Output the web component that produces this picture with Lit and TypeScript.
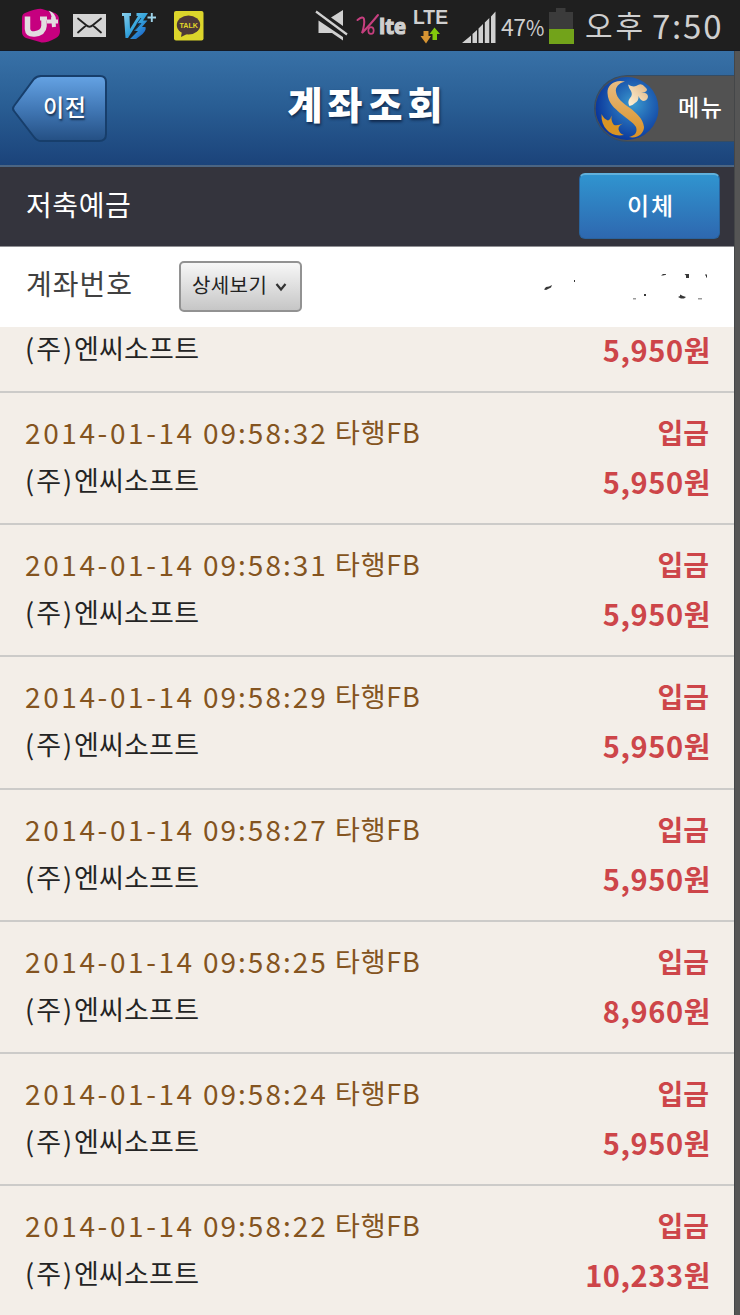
import { LitElement, html, css, svg, nothing } from "lit";
import { customElement, property } from "lit/decorators.js";

interface Deposit {
  time: string;
  amount: string;
}

const deposits: Deposit[] = [
  { time: "", amount: "5,950" },
  { time: "09:58:32", amount: "5,950" },
  { time: "09:58:31", amount: "5,950" },
  { time: "09:58:29", amount: "5,950" },
  { time: "09:58:27", amount: "5,950" },
  { time: "09:58:25", amount: "8,960" },
  { time: "09:58:24", amount: "5,950" },
  { time: "09:58:22", amount: "10,233" },
];

@customElement("status-bar")
class StatusBar extends LitElement {
  static styles = css`
    :host {
      display: flex;
      align-items: center;
      height: 51px;
      background: #1f1f1f;
      color: #cfcfcf;
      white-space: nowrap;
      border-bottom: 1px solid #151a24;
      box-sizing: border-box;
    }
    .icons { display: block; flex: none; }
    .percent { width: 43px; font-size: 23px; line-height: 50px; letter-spacing: -0.4px; padding-top: 2px; }
    .percent .sign { display: inline-block; font-size: 21px; letter-spacing: 0; transform: scaleX(0.95); transform-origin: left; }
    .battery { margin-left: 4px; }
    .meridiem { margin-left: 11px; width: 67px; font-size: 30px; letter-spacing: 3px; line-height: 44px; margin-top: -3px; }
    .clock { font-size: 33px; letter-spacing: 1.8px; line-height: 50px; }
    .lte { font: bold 20px "Liberation Sans", Arial, sans-serif; fill: #cfcfcf; }
    .volte { font: bold 21px "Open Sans", sans-serif; fill: #cfcfcf; stroke: #cfcfcf; stroke-width: 1.2; }
    .talk { font: bold 8px "Liberation Sans", Arial, sans-serif; fill: #e1d629; }
  `;

  render() {
    return html`
      <svg class="icons" width="501" height="50" viewBox="0 0 501 50">
        ${svg`
        <defs>
          <linearGradient id="v3" x1="0" y1="0" x2="1" y2="1">
            <stop offset="0" stop-color="#8bd0ec" /><stop offset=".5" stop-color="#35a4dc" /><stop offset="1" stop-color="#1550c0" />
          </linearGradient>
        </defs>
        <path d="M25 13 Q38 8 42 9 L55 13 Q59 15 59 19 L60 31 Q60 36 56 38 Q45 44 40 42 L26 38 Q22 36 22 32 V18 Q22 14 25 13Z" fill="#c6007f" />
        <path d="M27.500 16.500 V29 Q28 34.500 34.500 34 Q43.500 33 44 26 V18" fill="none" stroke="#e2dce0" stroke-width="5.500" />
        <path d="M40 18.500 H47 M47 21.500 H58 M53 17 L54 27" fill="none" stroke="#e2dce0" stroke-width="4" />
        <path d="M48.500 10.500 Q56 13 56 20 L51.500 22 Q52.500 15 48.500 10.500Z" fill="#e2dce0" />
        <rect x="73" y="14" width="33" height="23" fill="#d4d4d4" />
        <path d="M78 18.500 L86 25 Q89.500 28.500 93 25 L101 18.500 M78 32.500 L86 25.500 M101 32.500 L93 25.500" fill="none" stroke="#202020" stroke-width="1.800" stroke-linecap="round" />
        <path d="M122 13 H131 V16 H129.500 L130 29 L138 16 H136.500 V13 H148 L143 20.500 H147.500 L142 27 H145.500 Q147 31 140 36 L136 39 H130 L138 31 H134 L140.500 23.500 H137 L128 38 H125.500 L124 16 H122Z" fill="url(#v3)" />
        <path d="M134.500 31 L141 23.500 H137 L141 18" fill="none" stroke="#173b60" stroke-width="1" />
        <path d="M147.500 17.500 H156 M151.800 13 V22" stroke="#9ed3e9" stroke-width="1.900" />
        <rect x="174" y="11" width="29.500" height="29.500" rx="2" fill="#dcd52b" />
        <ellipse cx="188.500" cy="25" rx="11.700" ry="9.500" fill="#4c3837" />
        <path d="M182 31 L181 37 L189 33Z" fill="#4c3837" />
        <text class="talk" x="179.500" y="28" textLength="18.500" lengthAdjust="spacingAndGlyphs">TALK</text>

        <path d="M318.500 20.500 L343 37 V40.500 L332 33 H318.500Z M331 17.500 L343 10 V26Z" fill="#d0d0d0" />
        <path d="M317 14.500 L346 37" stroke="#1f1f1f" stroke-width="2" />
        <path d="M316 11.500 L347 34.500" stroke="#d0d0d0" stroke-width="2.200" />
        <path d="M357.500 20 Q363 15.500 364 19 Q365 24 362 33 Q369 26 378 15" fill="none" stroke="#c63f7f" stroke-width="2" stroke-linecap="round" />
        <ellipse cx="371" cy="30.500" rx="2.700" ry="3.400" fill="none" stroke="#c63f7f" stroke-width="1.700" />
        <text class="volte" x="379" y="33.500" textLength="27" lengthAdjust="spacingAndGlyphs">lte</text>
        <text class="lte" x="413" y="24" textLength="35" lengthAdjust="spacingAndGlyphs">LTE</text>
        <path d="M423.500 31 H428.500 V36 H431 L426 43.500 L420.500 36 H423.500Z" fill="#d69433" />
        <path d="M432.500 40 H437 V34 H440 L434.500 27.500 L429.500 34 H432.500Z" fill="#83c90c" />
        <path d="M462 43 L471 35.500 V43Z M472.500 34 L477 30 V43 H472.500Z M478.500 28.500 L483 24 V43 H478.500Z M484.800 22.500 L489.300 18 V43 H484.800Z M491 16.500 L495.500 11.500 V43 H491Z" fill="#d0d0d0" />
        `}
      </svg>
      <div class="percent">47<span class="sign">%</span></div>
      <svg class="icons battery" width="26" height="50" viewBox="0 0 26 50">
        <path d="M1 12 H8 V8 H17.500 V12 H25 V29 H1Z" fill="#3b3b3b" />
        <rect x="1" y="29" width="25" height="15" fill="#72a31a" />
      </svg>
      <div class="meridiem">오후</div>
      <div class="clock">7:50</div>
    `;
  }
}

@customElement("nav-header")
class NavHeader extends LitElement {
  static styles = css`
    :host {
      display: grid;
      grid-template-columns: 240px 1fr 240px;
      height: 116px;
      box-sizing: border-box;
      background: linear-gradient(#3871a7, #2a5f95 45%, #1b437a);
      border-bottom: 2px solid #4b6583;
      color: #fff;
    }
    .back { display: grid; width: 98px; height: 70px; margin: 22px 0 0 10px; }
    .back svg, .back span { grid-area: 1 / 1; }
    .back span { font-size: 23px; font-weight: 500; line-height: 67px; padding-left: 33px; letter-spacing: 0.5px; text-shadow: 1px 2px 2px #17304f; }
    .title { text-align: center; font-size: 38px; font-weight: 900; line-height: 104px; letter-spacing: 5px; text-indent: 1px; text-shadow: 1px 2px 3px #10284b; white-space: nowrap; }
    .menu { display: flex; justify-self: end; box-sizing: border-box; width: 140px; height: 67px; margin-top: 24px; background: #525252; border: solid #344c64; border-width: 1px 0 1px 1px; border-radius: 34px 0 0 34px; }
    .menu span { flex: 1; padding-left: 19px; font-size: 23px; font-weight: 500; line-height: 61px; letter-spacing: 1.5px; white-space: nowrap; }
  `;

  render() {
    return html`
      <div class="back">
        <svg width="98" height="70" viewBox="0 0 98 70">
          <defs>
            <linearGradient id="b" x2="0" y2="1"><stop stop-color="#65a3e4" /><stop offset=".5" stop-color="#4279b7" /><stop offset="1" stop-color="#244f83" /></linearGradient>
          </defs>
          <path d="M4 33 L24 6 Q27 3 31 3 H90 Q96 3 96 9 V61 Q96 68 89 68 H31 Q27 68 24 64 L4 38 Q2 35.500 4 33Z" fill="url(#b)" stroke="#173e6b" stroke-width="2" />
        </svg>
        <span>이전</span>
      </div>
      <div class="title">계좌조회</div>
      <div class="menu">
        <svg width="64" height="65" viewBox="0 0 64 65">
          <defs>
            <radialGradient id="ball" cx=".6" cy=".42" r=".62"><stop stop-color="#3b9bd0" /><stop offset=".48" stop-color="#2266b5" /><stop offset="1" stop-color="#09359a" /></radialGradient>
            <linearGradient id="gold" x2="0" y2="1"><stop stop-color="#e8bc83" /><stop offset="1" stop-color="#d99124" /></linearGradient>
            <linearGradient id="leaf" x1="1" y1="0" x2="0" y2="1"><stop stop-color="#dfb481" /><stop offset="1" stop-color="#fff4da" /></linearGradient>
          </defs>
          <circle cx="32" cy="32.500" r="31.500" fill="url(#ball)" />
          <path d="M30 5.500 C20 3 12 9 12.500 17 C13 28 20 32 25 37 C32 43 38 46 41 51 C43 57 39 60 34 61 C43 63 49 57 49 51 C48 42 40 36 35 32 C28 27 22 23 21 16 C20 11 24 7 30 5.500Z" fill="url(#gold)" />
          <path d="M33 8.500 Q39 12 43 9 Q47 7 50 11 Q54 14 50 16 L46 16.500 Q53 16 53 21 Q52 25 48 25 Q45 24 43.500 20 Q44 25 40 27 Q37 30 34.500 30 Q32 26 35 22 Q38 19 36 15 Q34 13 33 8.500Z" fill="url(#leaf)" />
          <path d="M6.500 38 Q9 43 13 44.500 Q16 43 16.500 39.500 Q16 46 19 49 Q23 50 28 47.500 Q23 50 23.500 53.500 Q25 58 29 59 Q18 61 12 54 Q6 48 6.500 38Z" fill="#d99424" />
        </svg>
        <span>메뉴</span>
      </div>
    `;
  }
}

@customElement("account-panel")
class AccountPanel extends LitElement {
  static styles = css`
    :host { display: block; }
    .name-row { display: flex; justify-content: space-between; box-sizing: border-box; height: 79px; padding: 6px 14px 0 26px; background: #34343d; color: #fff; }
    .name { font-size: 28px; line-height: 62px; letter-spacing: 0.6px; }
    .transfer { box-sizing: border-box; width: 141px; height: 66px; border: 1px solid #29639d; border-top: 2px solid #61b1dc; border-radius: 6px; background: linear-gradient(#3094cf, #2e68b0); text-align: center; font-size: 24px; font-weight: 500; line-height: 60px; letter-spacing: 2px; text-indent: 3px; }
    .number-row { display: flex; align-items: center; box-sizing: border-box; height: 81px; padding: 0 20px 0 26px; border-top: 1px solid #909094; background: #fff; color: #414141; }
    .label { width: 153px; font-size: 28px; line-height: 68px; padding-bottom: 8px; letter-spacing: 1px; }
    .detail { display: flex; align-items: center; box-sizing: border-box; width: 123px; height: 51px; margin-bottom: 1px; padding: 0 11px 4px; border: 2px solid #929292; border-radius: 5px; background: linear-gradient(#f7f7f7, #c6c6c6); color: #222; font-size: 20px; letter-spacing: 0.4px; white-space: nowrap; }
    .detail svg { flex: none; margin: 4px 0 0 8px; }
    .masked { margin-left: auto; }
  `;

  render() {
    return html`
      <div class="name-row">
        <div class="name">저축예금</div>
        <div class="transfer">이체</div>
      </div>
      <div class="number-row">
        <div class="label">계좌번호</div>
        <div class="detail">상세보기<svg width="12" height="10" viewBox="0 0 12 10"><path d="M1.500 2 L6 7.500 L10.500 2" fill="none" stroke="#333" stroke-width="2.200" /></svg></div>
        <svg class="masked" width="174" height="34" viewBox="0 0 174 34">
          <path d="M4 19.500 L6 17 L9 16.500 L12 15 L11 17.500 L6 20Z M34 10 H35 V12 H34Z M121 5.500 L123 4 H126 V4.800 L123 5.500Z M144.500 4 H149 V8 H146 V5.500Z M165 4.500 H167 V7.500 H166V5.500H165Z M104 24 H106 V26 H104Z M93 28.500 H96 V29.300 H93Z M138 27 L140 26 V24.500 L143 26 L146 27 L144 28.500 H141Z M158 28.500 H162 V29.200 H158Z" fill="#383838" />
        </svg>
      </div>
    `;
  }
}

@customElement("deposit-row")
class DepositRow extends LitElement {
  @property() time = "";
  @property() amount = "";

  static styles = css`
    :host { display: flex; justify-content: space-between; flex: none; box-sizing: border-box; height: 132.25px; padding: 16px 25px 0 25px; border-bottom: 2px solid #cccbc9; white-space: nowrap; }
    :host(.partial) { height: 65.75px; padding-top: 0; }
    :host(.partial) .left, :host(.partial) .right { margin-top: -2px; }
    .left, .right { display: flex; flex-direction: column; }
    .right { align-items: flex-end; color: #cd4549; font-weight: 700; }
    .when { display: flex; height: 48px; color: #845420; font-size: 28px; line-height: 46px; }
    .date { width: 178px; letter-spacing: 2.6px; }
    .time { width: 132px; letter-spacing: 2px; }
    .bank { font-size: 27px; letter-spacing: 0.8px; line-height: 46px; }
    .payer { display: flex; font-size: 27px; line-height: 46px; color: #242424; }
    .corp { width: 49px; letter-spacing: 2px; }
    .firm { letter-spacing: 0.2px; }
    .kind { height: 48px; font-size: 28px; line-height: 46px; font-weight: 700; }
    .sum { font-size: 29px; line-height: 49px; letter-spacing: 0.6px; margin-right: -2px; }
  `;

  render() {
    return html`
      <div class="left">
        ${this.time
          ? html`<div class="when"><span class="date">2014-01-14</span><span class="time">${this.time}</span><span class="bank">타행FB</span></div>`
          : nothing}
        <div class="payer"><span class="corp">(주)</span><span class="firm">엔씨소프트</span></div>
      </div>
      <div class="right">
        ${this.time ? html`<div class="kind">입금</div>` : nothing}
        <div class="sum">${this.amount}원</div>
      </div>
    `;
  }
}

@customElement("app-root")
class AppRoot extends LitElement {
  static styles = css`
    :host { display: flex; flex-direction: column; height: 1315px; overflow: hidden; background: #555; font-family: "Noto Sans CJK KR", "Noto Sans", sans-serif; }
    .page { display: flex; flex-direction: column; flex: 1; min-height: 0; box-sizing: border-box; width: 735px; border-right: 1px solid #444648; }
    .list { display: flex; flex-direction: column; flex: 1; min-height: 0; overflow: hidden; background: #f3eee8; }
  `;

  render() {
    return html`
      <status-bar></status-bar>
      <div class="page">
        <nav-header></nav-header>
        <account-panel></account-panel>
        <div class="list">
          ${deposits.map((d) => html`<deposit-row class=${d.time ? "" : "partial"} .time=${d.time} .amount=${d.amount}></deposit-row>`)}
        </div>
      </div>
    `;
  }
}
